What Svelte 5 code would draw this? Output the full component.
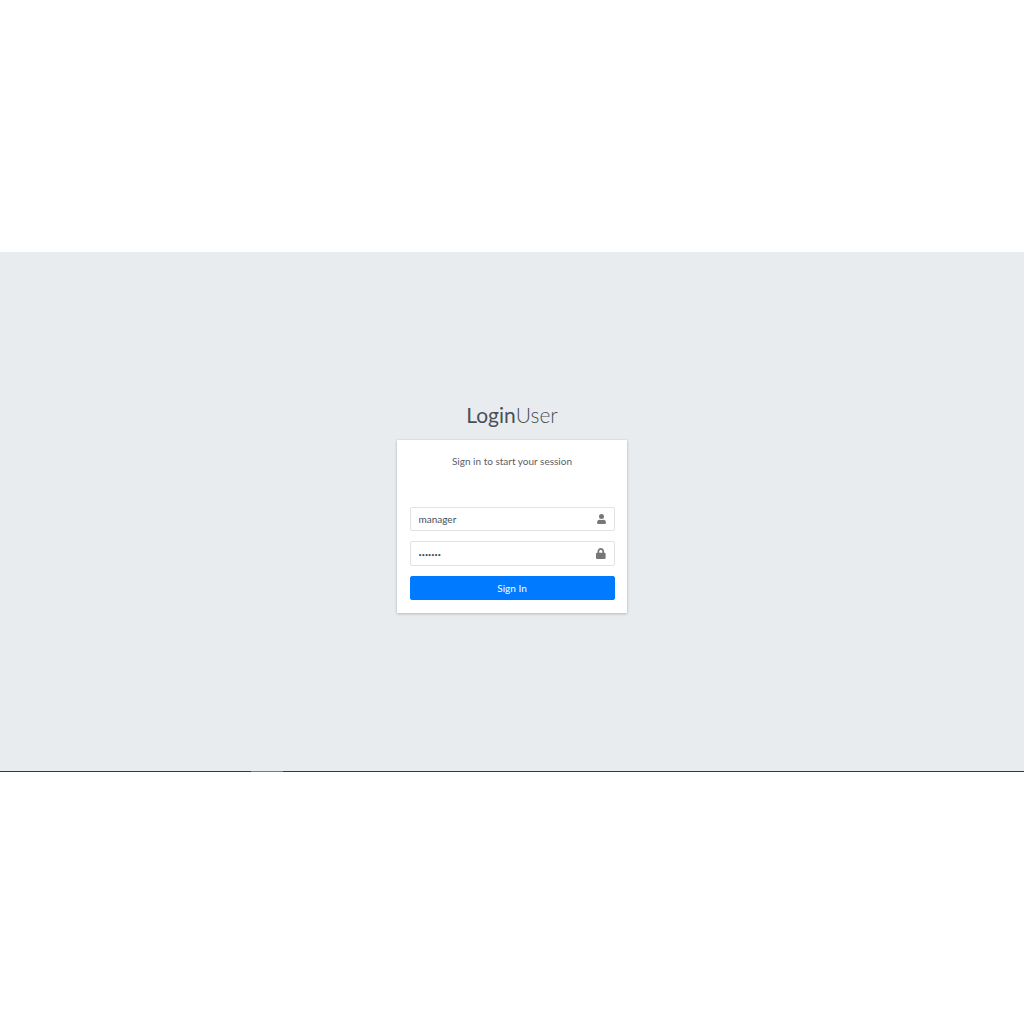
<script lang="ts">
  let username = "manager";
  let password = "1234567";
</script>

<div class="page">
  <main class="band">
    <div class="login-box">
      <h1 class="logo"><b>Login</b>User</h1>
      <div class="card">
        <p class="msg">Sign in to start your session</p>
        <form on:submit|preventDefault>
          <div class="field">
            <input type="text" bind:value={username} />
            <svg viewBox="0 0 448 512" width="9" height="10" aria-hidden="true">
              <path d="M224 256a128 128 0 1 0 0-256 128 128 0 0 0 0 256zm90 32h-17a174 174 0 0 1-146 0h-17A134 134 0 0 0 0 422v42a48 48 0 0 0 48 48h352a48 48 0 0 0 48-48v-42a134 134 0 0 0-134-134z" />
            </svg>
          </div>
          <div class="field">
            <input class="secret" type="password" bind:value={password} />
            <svg viewBox="0 0 448 512" width="9.6" height="11" aria-hidden="true">
              <path d="M400 224h-24v-72C376 68 308 0 224 0S72 68 72 152v72H48a48 48 0 0 0-48 48v192a48 48 0 0 0 48 48h352a48 48 0 0 0 48-48V272a48 48 0 0 0-48-48zm-104 0H152v-72a72 72 0 0 1 144 0v72z" />
            </svg>
          </div>
          <button type="submit">Sign In</button>
        </form>
      </div>
    </div>
  </main>
  <div class="edge">
    <span class="dark left"></span>
    <span class="light"></span>
    <span class="dark"></span>
  </div>
</div>

<style>
  :global(body) { margin: 0; background: #fff; }

  .page {
    padding-top: 252px;
    font-family: Lato, "Liberation Sans", sans-serif;
    color: #495057;
  }

  .band {
    height: 519px;
    background: #e9ecef;
    display: flex;
    flex-direction: column;
    align-items: center;
    box-sizing: border-box;
    padding-top: 150px;
  }

  .login-box { width: 230px; }

  .logo {
    margin: 0;
    height: 38px;
    line-height: 25px;
    font-size: 21px;
    font-weight: 300;
    text-align: center;
    color: #495057;
  }
  .logo b { font-weight: 400; }

  .card {
    background: #fff;
    height: 173px;
    box-sizing: border-box;
    padding: 0 12.5px;
    box-shadow: 0 0 1px rgba(0, 0, 0, .13), 0 1px 3px rgba(0, 0, 0, .2);
  }

  .msg {
    margin: 0;
    padding-top: 14px;
    height: 67px;
    box-sizing: border-box;
    font-size: 10px;
    line-height: 15px;
    font-weight: 400;
    text-align: center;
    color: #5a6167;
  }

  .field {
    position: relative;
    height: 24.4px;
    margin-bottom: 10px;
  }

  .field input {
    display: block;
    width: 100%;
    height: 100%;
    box-sizing: border-box;
    padding: 0 24px 0 8px;
    border: 1px solid #e0e3e6;
    border-radius: 2px;
    background: #fff;
    font: 400 10px Lato, "Liberation Sans", sans-serif;
    color: #495057;
    outline: none;
  }

  .field input.secret {
    font-size: 5.5px;
    padding-top: 2px;
  }

  .field svg {
    position: absolute;
    right: 9px;
    top: 7px;
    fill: #777;
  }

  button {
    display: block;
    width: 100%;
    height: 24.4px;
    padding: 0;
    border: 1px solid #007bff;
    border-radius: 2px;
    background: #007bff;
    color: #fff;
    font: 400 10px Lato, "Liberation Sans", sans-serif;
  }

  .edge { display: flex; height: 1px; }
  .dark { flex: 1; background: #36383b; }
  .left { flex: 0 0 251px; }
  .light { flex: 0 0 32px; background: #76797d; }
</style>
